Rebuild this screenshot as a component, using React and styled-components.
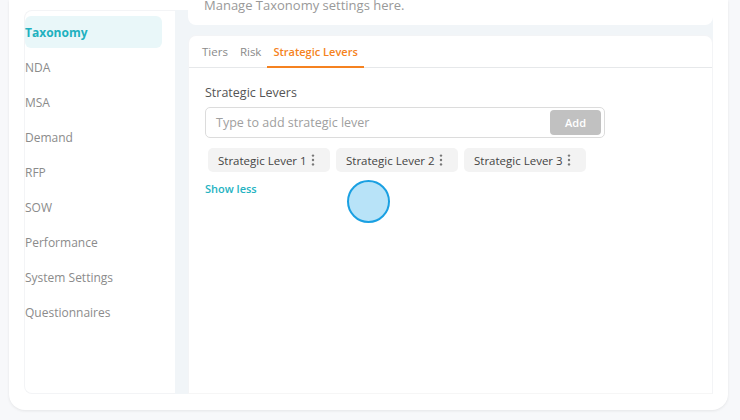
import React from "react";
import styled, { createGlobalStyle } from "styled-components";

const Global = createGlobalStyle`
  html, body { margin: 0; padding: 0; background: #f7f8fa; }
  body { font-family: "Open Sans", "Noto Sans", sans-serif; overflow: hidden; }
  * { box-sizing: border-box; }
`;

const Page = styled.div`
  width: 740px;
  height: 420px;
  padding-left: 9px;
`;

const Card = styled.div`
  width: 719px;
  height: 410px;
  background: #ffffff;
  border-radius: 0 0 16px 16px;
  box-shadow: 0 1px 3px rgba(0, 0, 0, 0.08);
  padding: 10px 15px 16px 16px;
  display: flex;
`;

const Sidebar = styled.nav`
  width: 151px;
  flex: none;
  border: 1px solid #f3f4f6;
  border-right: none;
  border-radius: 8px 0 0 8px;
  padding: 5px 13px 0 0;
  display: flex;
  flex-direction: column;
  gap: 3px;
  margin-left: -1px;
`;

const NavItem = styled.div`
  height: 32px;
  display: flex;
  align-items: center;
  padding-left: 0;
  border-radius: 6px;
  font-size: 12px;
  font-weight: ${(p) => (p.$active ? 700 : 400)};
  color: ${(p) => (p.$active ? "#21b1bf" : "#8b8b8b")};
  background: ${(p) => (p.$active ? "#e9f7f9" : "transparent")};
`;

const Main = styled.main`
  flex: 1;
  background: #f1f5f8;
  padding-left: 13px;
  display: flex;
  flex-direction: column;
  gap: 10px;
`;

const HeaderCard = styled.div`
  height: 15px;
  background: #ffffff;
  border-radius: 0 0 8px 8px;
  padding-left: 16px;
  overflow: visible;
`;

const HeaderText = styled.div`
  margin-top: -14px;
  font-size: 13px;
  line-height: 18px;
  color: #999999;
`;

const TabCard = styled.section`
  flex: 1;
  background: #ffffff;
  border: 1px solid #f3f4f6;
  border-bottom-color: #f6f6f6;
  border-radius: 8px 8px 0 0;
  position: relative;
`;

const Tabs = styled.div`
  display: flex;
  padding-left: 7px;
  border-bottom: 1px solid #e6e8ea;
  height: 32px;
`;

const Tab = styled.div`
  padding: 0 6px;
  display: flex;
  align-items: center;
  font-size: ${(p) => (p.$active ? "11px" : "11.5px")};
  font-weight: ${(p) => (p.$active ? 600 : 400)};
  color: ${(p) => (p.$active ? "#f58220" : "#8a8a8a")};
  border-bottom: 2px solid ${(p) => (p.$active ? "#f58220" : "transparent")};
  margin-bottom: -1px;
  padding-top: 1px;
`;

const Body = styled.div`
  padding: 16px 15px 0 16px;
`;

const Label = styled.div`
  font-size: 12.5px;
  color: #555555;
  line-height: 18px;
  margin-bottom: 5px;
`;

const InputBox = styled.div`
  width: 400px;
  height: 31px;
  border: 1px solid #dcdcdc;
  border-radius: 5px;
  display: flex;
  align-items: center;
  justify-content: space-between;
  padding: 0 3px 0 10px;
`;

const Placeholder = styled.span`
  font-size: 12.5px;
  color: #a0a0a0;
`;

const AddButton = styled.button`
  width: 51px;
  height: 25px;
  border: none;
  border-radius: 4px;
  background: #c1c1c1;
  color: #ffffff;
  font-family: inherit;
  font-size: 11px;
  font-weight: 600;
`;

const Chips = styled.div`
  display: flex;
  gap: 6px;
  margin: 10px 0 0 3px;
`;

const Chip = styled.div`
  width: 122px;
  height: 24px;
  background: #f3f3f3;
  border-radius: 5px;
  display: flex;
  align-items: center;
  justify-content: space-between;
  padding: 0 15px 0 10px;
  font-size: 11.5px;
  font-weight: 500;
  color: #444444;
`;

const Kebab = styled.svg`
  width: 4px;
  height: 12px;
  flex: none;
`;

const ShowLess = styled.div`
  margin-top: 9px;
  font-size: 11px;
  font-weight: 600;
  color: #24b3c2;
`;

const CursorDot = styled.div`
  position: absolute;
  left: 158px;
  top: 144px;
  width: 43px;
  height: 43px;
  border-radius: 50%;
  background: #b8e3f8;
  border: 2px solid #1aa0e2;
`;

const navItems = [
  "Taxonomy",
  "NDA",
  "MSA",
  "Demand",
  "RFP",
  "SOW",
  "Performance",
  "System Settings",
  "Questionnaires",
];

const KebabIcon = () => (
  <Kebab viewBox="0 0 4 12">
    <circle cx="2" cy="1.6" r="1.2" fill="#777" />
    <circle cx="2" cy="6" r="1.2" fill="#777" />
    <circle cx="2" cy="10.4" r="1.2" fill="#777" />
  </Kebab>
);

export default function App() {
  return (
    <Page>
      <Global />
      <Card>
        <Sidebar>
          {navItems.map((n, i) => (
            <NavItem key={n} $active={i === 0}>
              {n}
            </NavItem>
          ))}
        </Sidebar>
        <Main>
          <HeaderCard>
            <HeaderText>Manage Taxonomy settings here.</HeaderText>
          </HeaderCard>
          <TabCard>
            <Tabs>
              <Tab>Tiers</Tab>
              <Tab>Risk</Tab>
              <Tab $active>Strategic Levers</Tab>
            </Tabs>
            <Body>
              <Label>Strategic Levers</Label>
              <InputBox>
                <Placeholder>Type to add strategic lever</Placeholder>
                <AddButton>Add</AddButton>
              </InputBox>
              <Chips>
                {[1, 2, 3].map((n) => (
                  <Chip key={n}>
                    <span>Strategic Lever {n}</span>
                    <KebabIcon />
                  </Chip>
                ))}
              </Chips>
              <ShowLess>Show less</ShowLess>
            </Body>
            <CursorDot />
          </TabCard>
        </Main>
      </Card>
    </Page>
  );
}
